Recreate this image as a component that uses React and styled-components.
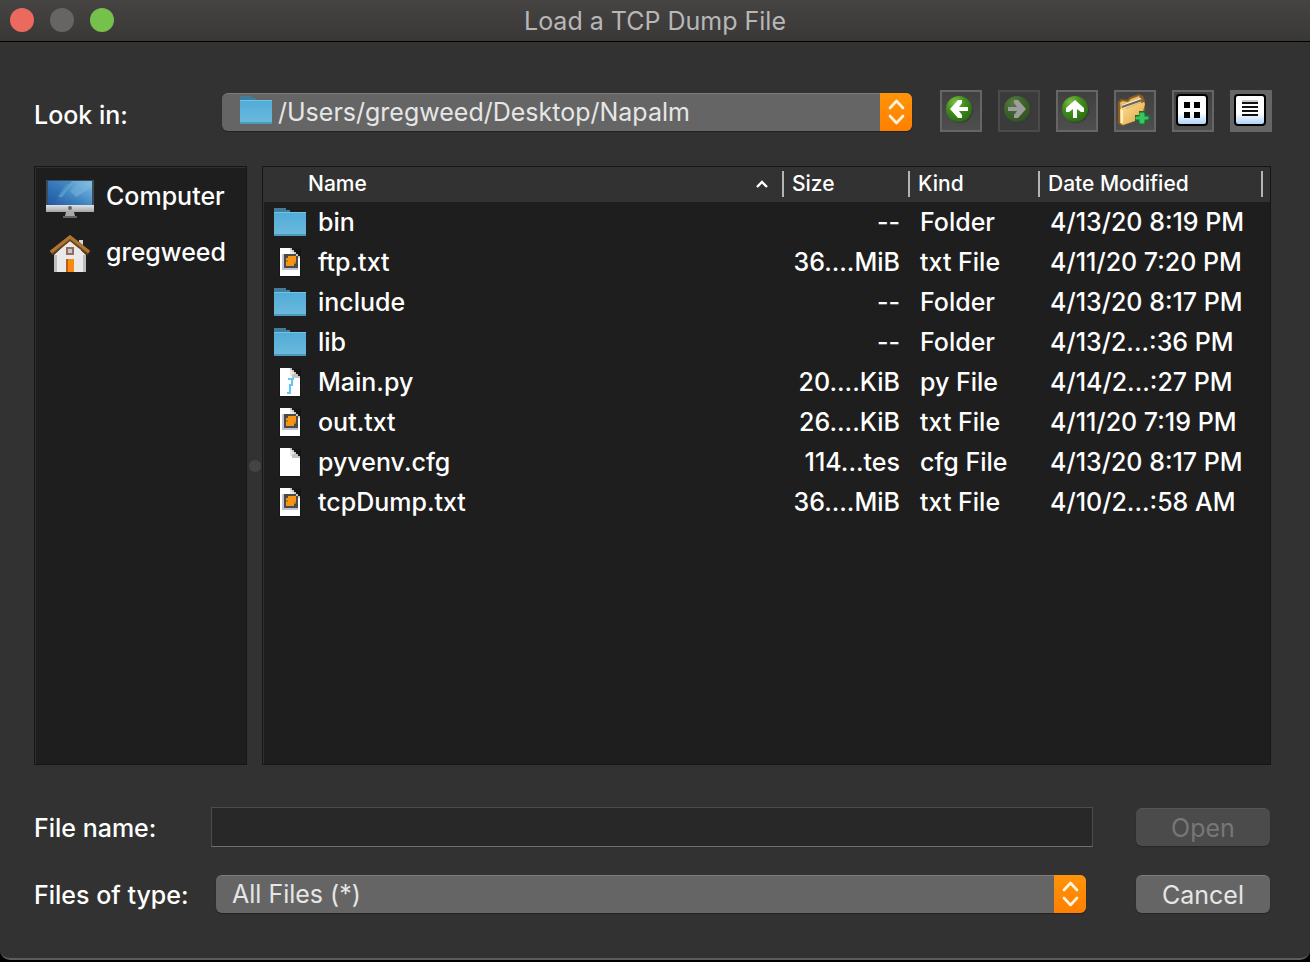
import React from "react";
import styled, { createGlobalStyle } from "styled-components";

const GlobalStyle = createGlobalStyle`
  *, *::before, *::after { box-sizing: border-box; }
  body {
    margin: 0;
    background: #000;
    color: #fff;
    font-family: Inter, "Liberation Sans", sans-serif;
    font-size: 25px;
    font-weight: 500;
    line-height: 32px;
  }
  button, input, select { font: inherit; font-weight: 400; }
`;

const Dialog = styled.main`
  display: flex;
  flex-direction: column;
  min-height: calc(100vh - 2px);
  background: #323232;
  border-bottom: 2px solid #5c5c5c;
  border-radius: 0 0 10px 10px;
`;

const TitleBar = styled.header`
  display: grid;
  grid-template-columns: 1fr auto 1fr;
  align-items: center;
  height: 42px;
  padding: 0 10px 2px;
  background: linear-gradient(#454443, #393837);
  border-bottom: 1px solid #000;
`;

const Lights = styled.div`
  display: flex;
  gap: 16px;
`;

const Light = styled.button`
  width: 24px;
  height: 24px;
  padding: 0;
  border: 0;
  border-radius: 50%;
  background: ${(p) => p.$color};
`;

const Title = styled.h1`
  margin: 0;
  padding-top: 2px;
  font-size: 25px;
  font-weight: 400;
  color: #b8b7b7;
`;

const Toolbar = styled.div`
  display: flex;
  align-items: center;
  height: 42px;
  margin: 48px 38px 34px 34px;
`;

const Label = styled.label`
  padding-top: ${(p) => p.$drop || 2}px;
`;

const LookLabel = styled(Label)`
  width: 188px;
`;

const Combo = styled.div`
  position: relative;
  flex: 1;
  height: 38px;
  margin: ${(p) => p.$margin || "0"};
  border-radius: 6px;
  box-shadow: 0 1px 1px #222;
`;

const Select = styled.select`
  appearance: none;
  display: block;
  width: 100%;
  height: 38px;
  padding: 0 40px 1px ${(p) => p.$indent}px;
  border: 0;
  border-top: 1px solid #7d7d7d;
  border-radius: 6px;
  background: #656565;
  color: #e6e6e6;
`;

const ComboIcon = styled.span`
  position: absolute;
  left: 18px;
  top: 3px;
  height: 28px;
  pointer-events: none;
`;

const Stepper = styled.span`
  position: absolute;
  top: 0;
  right: 0;
  width: 32px;
  height: 38px;
  border-radius: 0 6px 6px 0;
  background: linear-gradient(#ff9409, #ff8000);
  pointer-events: none;
`;

const Tools = styled.div`
  display: flex;
  gap: 16px;
  margin-left: 28px;
`;

const ToolButton = styled.button`
  width: 42px;
  height: 42px;
  padding: 0;
  border: 2px solid ${(p) => (p.disabled ? "#4b4b4b" : "#666")};
  background: ${(p) =>
    p.$on ? "#666" : p.disabled ? "#3b3b3b" : "linear-gradient(#404040, #4e4e4e)"};

  svg {
    display: block;
    margin: -2px;
    opacity: ${(p) => (p.disabled ? 0.5 : 1)};
  }
`;

const Panels = styled.div`
  flex: 1;
  display: flex;
  margin: 0 39px 42px 34px;
`;

const Sidebar = styled.nav`
  width: 213px;
  padding: 2px 11px;
  background: #1e1e1e;
  border: 1px solid #161616;
  box-shadow: inset 1px 1px #303030;
`;

const Place = styled.a`
  display: flex;
  align-items: center;
  gap: 12px;
  height: 56px;
  color: #fff;
  text-decoration: none;

  svg {
    flex: none;
    margin-top: 4px;
  }
`;

const PlaceName = styled.span`
  padding-bottom: 2px;
`;

const Splitter = styled.div`
  display: flex;
  align-items: center;
  justify-content: center;
  width: 15px;

  &::after {
    content: "";
    width: 12px;
    height: 12px;
    border-radius: 50%;
    background: #444;
  }
`;

const Listing = styled.section`
  flex: 1;
  background: #1e1e1e;
  border: 1px solid #161616;
  box-shadow: inset 1px 0 #303030;
`;

const Table = styled.table`
  width: 100%;
  table-layout: fixed;
  border-collapse: collapse;
`;

const Col = styled.col`
  width: ${(p) => p.$width};
`;

const Head = styled.th`
  height: 35px;
  padding: 0 0 2px;
  background: #323232;
  font-size: 21px;
  font-weight: 500;
  text-align: left;
`;

const HeadInner = styled.div`
  display: flex;
  align-items: center;
  justify-content: space-between;
  height: 26px;
  padding-left: ${(p) => p.$indent}px;
  padding-right: 14px;
  border-right: 2px solid #b4b4b4;
  line-height: 26px;
  white-space: nowrap;
`;

const Cell = styled.td`
  height: 40px;
  padding: 0 ${(p) => (p.$right ? 10 : 0)}px 0 ${(p) => (p.$right ? 0 : 10)}px;
  text-align: ${(p) => (p.$right ? "right" : "left")};
  white-space: nowrap;
`;

const FileName = styled.div`
  display: flex;
  align-items: center;
  gap: 12px;
  padding-left: 1px;
`;

const Form = styled.form`
  display: grid;
  grid-template-columns: 177px 1fr 134px;
  row-gap: 28px;
  align-items: center;
  margin: 0 40px 45px 34px;
`;

const TextField = styled.input`
  display: block;
  width: 100%;
  height: 40px;
  padding: 0 8px;
  border: 1px solid #4c4c4c;
  border-bottom-color: #707070;
  border-radius: 0;
  background: #282828;
  color: #fff;
`;

const FieldCell = styled.div`
  margin-right: 43px;
`;

const PushButton = styled.button`
  height: 38px;
  padding: 0;
  border: 0;
  border-top: 1px solid ${(p) => (p.disabled ? "#555" : "#7d7d7d")};
  border-radius: 6px;
  background: ${(p) => (p.disabled ? "#4b4b4b" : "#656565")};
  color: ${(p) => (p.disabled ? "#777" : "#e6e6e6")};
  box-shadow: 0 1px 1px #262626;
`;

function Chevrons() {
  return (
    <svg width="32" height="38" viewBox="0 0 32 38" fill="none" stroke="#fff3e0" strokeWidth="2.6" strokeLinecap="round" strokeLinejoin="round" aria-hidden="true">
      <path d="M10 15l6.5-7 6.5 7M10 23l6.5 7 6.5-7" />
    </svg>
  );
}

function FolderIcon() {
  return (
    <svg width="32" height="28" viewBox="0 0 32 28" aria-hidden="true">
      <defs>
        <linearGradient id="folder" x1="0" y1="0" x2="0" y2="1">
          <stop offset="0" stopColor="#50acd8" />
          <stop offset="1" stopColor="#6dbadc" />
        </linearGradient>
      </defs>
      <path d="M0 0h12v2h4v2H0z" fill="#417d9d" />
      <path d="M0 4h32v24H0z" fill="url(#folder)" />
      <path d="M0 4h32v1H0z" fill="#75c4e6" />
      <path d="M0 26h32v2H0z" fill="#4d9bbb" />
    </svg>
  );
}

function DocIcon({ kind }) {
  return (
    <svg width="32" height="30" viewBox="0 0 32 30" aria-hidden="true">
      <path d="M5 2h22v28H5z" fill="#171717" />
      <path d="M6 1h10v2h2v2h2v2h4v2h2v20H6z" fill="#fff" />
      <path d="M16 1h2v2h2v2h2v2h2v2h2v2h-8V9h-2z" fill="#c4c4c4" />
      <path d="M16 3h2v2h2v2h-2v2h-2z" fill="#e9e9e9" />
      {kind === "text" && (
        <>
          <path d="M8 7h16v16H8z" fill="#c3c6c8" />
          <path d="M10 7h12v2h2v12H10z" fill="#454b50" />
          <path d="M12 11h2V9h8v8h-2v2h-8z" fill="#f79510" />
          <path d="M12 13h2v2h-2zM20 15h2v2h-2z" fill="#b87526" />
        </>
      )}
      {kind === "python" && (
        <path d="M14 12h6M18 12v6h-2v8M13 26h4" fill="none" stroke="#62c6f6" strokeWidth="2" />
      )}
    </svg>
  );
}

function ComputerIcon() {
  return (
    <svg width="48" height="40" viewBox="0 0 48 40" aria-hidden="true">
      <defs>
        <linearGradient id="screen" x1="0" y1="1" x2="1" y2="0">
          <stop offset="0" stopColor="#2456a0" />
          <stop offset=".45" stopColor="#3f86c2" />
          <stop offset="1" stopColor="#82c0e4" />
        </linearGradient>
        <linearGradient id="sheen" x1="0" y1="0" x2="0" y2="1">
          <stop offset="0" stopColor="#a4d3ee" stopOpacity=".1" />
          <stop offset="1" stopColor="#a4d3ee" stopOpacity=".35" />
        </linearGradient>
        <linearGradient id="metal" x1="0" y1="0" x2="0" y2="1">
          <stop offset="0" stopColor="#e2e2e2" />
          <stop offset="1" stopColor="#a5a5a5" />
        </linearGradient>
      </defs>
      <path d="M0 1h48v32H0z" fill="#3d4a58" />
      <path d="M2 2h44v24H2z" fill="url(#screen)" />
      <path d="M2 2h24L10 22H2z" fill="#1e5ba8" opacity=".35" />
      <path d="M12 18L20 5h6l-10 13zM24 12l8-8h14v4L30 18z" fill="url(#sheen)" />
      <path d="M0 26h48v7H0z" fill="url(#metal)" />
      <circle cx="24" cy="29" r="2" fill="#666" />
      <path d="M20 33h8l1 4H19z" fill="#a8a8a8" />
      <path d="M17 37h14v2H17z" fill="#656565" />
    </svg>
  );
}

function HomeIcon() {
  return (
    <svg width="48" height="40" viewBox="0 0 48 40" aria-hidden="true">
      <path d="M33 5h4v10h-4z" fill="#d8d8d8" />
      <path d="M24 5L8 20v17h32V20z" fill="#e9e9e9" />
      <path d="M8 20h3v17H8zM37 20h3v17h-3z" fill="#bdbdbd" />
      <path d="M5 18L24 3l19 15" fill="none" stroke="#6b4419" strokeWidth="5" />
      <path d="M5 17L24 2l19 15" fill="none" stroke="#ac7733" strokeWidth="3" />
      <path d="M21 13h6v6h-6z" fill="#b3cbe3" stroke="#9a6a52" strokeWidth="2" />
      <path d="M20 24h8v13h-8z" fill="#f68a12" />
      <path d="M20 24h2v13h-2z" fill="#b85f10" />
    </svg>
  );
}

function ArrowIcon({ turn }) {
  return (
    <svg width="42" height="42" viewBox="0 0 42 42" aria-hidden="true">
      <defs>
        <radialGradient id="orb" cx=".35" cy=".25" r=".8">
          <stop offset="0" stopColor="#7cc043" />
          <stop offset=".5" stopColor="#3f8a1c" />
          <stop offset="1" stopColor="#2b6a12" />
        </radialGradient>
      </defs>
      <circle cx="20" cy="20" r="13" fill="#303030" opacity=".6" />
      <circle cx="19" cy="19" r="13" fill="url(#orb)" />
      <path
        d="M10 19l8-9h4v3l-3 4h9v4h-9l3 4v3h-4z"
        fill="#fff"
        transform={`rotate(${turn} 19 19)`}
      />
    </svg>
  );
}

function NewFolderIcon() {
  return (
    <svg width="42" height="42" viewBox="0 0 42 42" aria-hidden="true">
      <defs>
        <linearGradient id="gold" x1="0" y1="0" x2="1" y2="1">
          <stop offset="0" stopColor="#ffe39a" />
          <stop offset="1" stopColor="#dfa23f" />
        </linearGradient>
      </defs>
      <path d="M4 12l3-3 6 1 3-3 9-3 4 2 2 5v16L8 36l-4-3z" fill="#8f5d20" />
      <path d="M6 13l2-2 6 1 3-3 8-3 2 4v14L8 31z" fill="#e8bd66" />
      <path d="M8 15l19-7 1 3-20 8z" fill="#f4f0e6" />
      <path d="M8 17l20-7" stroke="#6d6556" strokeWidth="2" />
      <path d="M6 19l3-1 4 1 17-7 1 2-4 15-18 6-3-2z" fill="url(#gold)" />
      <path d="M8 20v13" stroke="#fff0bd" strokeWidth="2" />
      <path d="M25 21h6v4h5v6h-5v4h-6v-4h-4v-6h4z" fill="#1f6b33" />
      <path d="M26 23h4v4h4v2h-4v4h-4v-4h-4v-2h4z" fill="#35c85c" stroke="#35c85c" />
    </svg>
  );
}

function ViewFrame({ children }) {
  return (
    <svg width="42" height="42" viewBox="0 0 42 42" aria-hidden="true">
      <defs>
        <linearGradient id="paper" x1="0" y1="0" x2="0" y2="1">
          <stop offset=".6" stopColor="#fff" />
          <stop offset="1" stopColor="#a9d0fa" />
        </linearGradient>
      </defs>
      <rect x="5" y="5" width="30" height="30" rx="3" fill="url(#paper)" stroke="#000" strokeWidth="2" />
      {children}
    </svg>
  );
}

function IconsViewIcon() {
  return (
    <ViewFrame>
      <path d="M12 12h6v6h-6zM22 12h6v6h-6zM12 22h6v6h-6zM22 22h6v6h-6z" fill="#000" />
    </ViewFrame>
  );
}

function ListViewIcon() {
  return (
    <ViewFrame>
      <path d="M12 11h16" stroke="#ccc" strokeWidth="2" />
      <path d="M12 13h16M12 17h16M12 21h16M12 25h16" stroke="#111" strokeWidth="2" />
    </ViewFrame>
  );
}

const files = [
  { name: "bin", size: "--", kind: "Folder", date: "4/13/20 8:19 PM" },
  { name: "ftp.txt", size: "36....MiB", kind: "txt File", date: "4/11/20 7:20 PM", doc: "text" },
  { name: "include", size: "--", kind: "Folder", date: "4/13/20 8:17 PM" },
  { name: "lib", size: "--", kind: "Folder", date: "4/13/2...:36 PM" },
  { name: "Main.py", size: "20....KiB", kind: "py File", date: "4/14/2...:27 PM", doc: "python" },
  { name: "out.txt", size: "26....KiB", kind: "txt File", date: "4/11/20 7:19 PM", doc: "text" },
  { name: "pyvenv.cfg", size: "114...tes", kind: "cfg File", date: "4/13/20 8:17 PM", doc: "plain" },
  { name: "tcpDump.txt", size: "36....MiB", kind: "txt File", date: "4/10/2...:58 AM", doc: "text" },
];

export default function App() {
  return (
    <>
      <GlobalStyle />
      <Dialog>
        <TitleBar>
          <Lights>
            <Light $color="#ec695d" aria-label="Close" />
            <Light $color="#666564" aria-label="Minimize" />
            <Light $color="#76c14b" aria-label="Zoom" />
          </Lights>
          <Title>Load a TCP Dump File</Title>
        </TitleBar>

        <Toolbar>
          <LookLabel htmlFor="look-in" $drop={8}>Look in:</LookLabel>
          <Combo $margin="2px 0 0">
            <Select id="look-in" $indent={56}>
              <option>/Users/gregweed/Desktop/Napalm</option>
            </Select>
            <ComboIcon><FolderIcon /></ComboIcon>
            <Stepper><Chevrons /></Stepper>
          </Combo>
          <Tools>
            <ToolButton aria-label="Back"><ArrowIcon turn={0} /></ToolButton>
            <ToolButton aria-label="Forward" disabled><ArrowIcon turn={180} /></ToolButton>
            <ToolButton aria-label="Parent directory"><ArrowIcon turn={90} /></ToolButton>
            <ToolButton aria-label="Create new folder"><NewFolderIcon /></ToolButton>
            <ToolButton aria-label="List view"><IconsViewIcon /></ToolButton>
            <ToolButton aria-label="Detail view" $on><ListViewIcon /></ToolButton>
          </Tools>
        </Toolbar>

        <Panels>
          <Sidebar>
            <Place href="#computer"><ComputerIcon /><PlaceName>Computer</PlaceName></Place>
            <Place href="#home"><HomeIcon /><PlaceName>gregweed</PlaceName></Place>
          </Sidebar>
          <Splitter />
          <Listing>
            <Table>
              <colgroup>
                <Col />
                <Col $width="126px" />
                <Col $width="130px" />
                <Col $width="223px" />
                <Col $width="7px" />
              </colgroup>
              <thead>
                <tr>
                  <Head>
                    <HeadInner $indent={45}>
                      Name
                      <svg width="12" height="8" viewBox="0 0 12 8" fill="none" stroke="#fff" strokeWidth="2.4" aria-hidden="true">
                        <path d="M1 7l5-5 5 5" />
                      </svg>
                    </HeadInner>
                  </Head>
                  <Head><HeadInner $indent={8}>Size</HeadInner></Head>
                  <Head><HeadInner $indent={8}>Kind</HeadInner></Head>
                  <Head><HeadInner $indent={8}>Date Modified</HeadInner></Head>
                  <Head as="td" />
                </tr>
              </thead>
              <tbody>
                {files.map((f) => (
                  <tr key={f.name}>
                    <Cell>
                      <FileName>
                        {f.doc ? <DocIcon kind={f.doc} /> : <FolderIcon />}
                        {f.name}
                      </FileName>
                    </Cell>
                    <Cell $right>{f.size}</Cell>
                    <Cell>{f.kind}</Cell>
                    <Cell>{f.date}</Cell>
                    <td />
                  </tr>
                ))}
              </tbody>
            </Table>
          </Listing>
        </Panels>

        <Form onSubmit={(e) => e.preventDefault()}>
          <Label htmlFor="file-name">File name:</Label>
          <FieldCell><TextField id="file-name" type="text" /></FieldCell>
          <PushButton type="submit" disabled>Open</PushButton>
          <Label htmlFor="file-type">Files of type:</Label>
          <Combo $margin="0 50px 0 5px">
            <Select id="file-type" $indent={16}>
              <option>All Files (*)</option>
            </Select>
            <Stepper><Chevrons /></Stepper>
          </Combo>
          <PushButton type="button">Cancel</PushButton>
        </Form>
      </Dialog>
    </>
  );
}
